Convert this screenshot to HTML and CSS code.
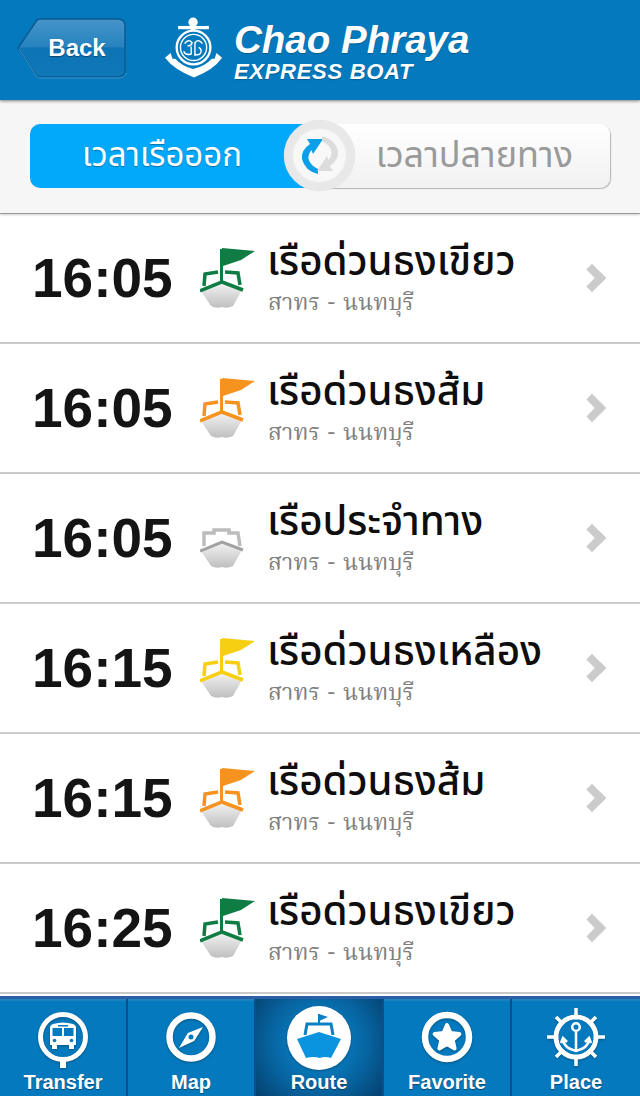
FILE: index.html
```html
<!DOCTYPE html>
<html lang="th">
<head>
  <meta charset="utf-8">
  <title>Chao Phraya Express Boat</title>
  <link rel="stylesheet" href="styles.css">
</head>
<body>
  <svg class="defs" width="0" height="0">
    <defs>
      <linearGradient id="hull" x1="0" y1="0" x2="0" y2="1">
        <stop offset="0" stop-color="#f2f2f2"/>
        <stop offset="1" stop-color="#bfbfbf"/>
      </linearGradient>
    </defs>
    <symbol id="boat" viewBox="0 0 56 66">
      <path d="M4 40 V27 H14 V24 H29 V27 H38 L40 40" fill="none" stroke="#bcbcbc" stroke-width="3.500"/>
      <path d="M1 45 L22 37 L42 44 L33 60 Q27 63 22 61 Q16 63 11 60 Z" fill="url(#hull)"/>
      <path d="M0 45 L22 36 L43 44" fill="none" stroke="#a2a2a2" stroke-width="3"/>
    </symbol>
    <symbol id="flagboat" viewBox="0 0 56 66">
      <path d="M4 40 L5 28 L18 26 M25 26 L38 27 L40 39" fill="none" stroke="currentColor" stroke-width="3.500"/>
      <path d="M1 45 L22 37 L42 44 L33 60 Q27 63 22 61 Q16 63 11 60 Z" fill="url(#hull)"/>
      <path d="M0 45 L22 36 L43 44" fill="none" stroke="currentColor" stroke-width="3.500"/>
      <path d="M21.500 36 V3" stroke="currentColor" stroke-width="3"/>
      <path d="M22 2 L55 5 L41 14 L23 20 Z" fill="currentColor"/>
    </symbol>
  </svg>

  <header class="topbar">
    <a class="back">
      <svg class="back-shape" viewBox="0 0 110 62" width="110" height="62">
        <defs>
          <linearGradient id="backfill" x1="0" y1="0" x2="0" y2="1">
            <stop offset="0" stop-color="#4594c8"/>
            <stop offset=".48" stop-color="#2683bf"/>
            <stop offset=".5" stop-color="#0d74b5"/>
            <stop offset="1" stop-color="#0f78b8"/>
          </linearGradient>
        </defs>
        <path d="M1 30 L20 2 Q21 1 24 1 H101 Q108 1 108 8 V52 Q108 59 101 59 H24 Q21 59 20 58 Z" fill="url(#backfill)" stroke="#0b5b90" stroke-width="1.500"/>
        <path d="M2 31 L20 59 Q21 60 24 60 H101 Q108 60 109 55" fill="none" stroke="#3e94ca" stroke-width="1"/>
      </svg>
      <span>Back</span>
    </a>
    <div class="logo">
      <svg class="anchor" viewBox="0 0 62 65" width="58" height="62">
        <circle cx="30" cy="6" r="5" fill="#fff"/>
        <rect x="27.500" y="9" width="5" height="8" fill="#fff"/>
        <rect x="14" y="10" width="33" height="3.500" fill="#fff"/>
        <path d="M0 44 L6 39 L8 45 L11 45 Q18 53 30 56 Q43 53 50 45 L53 45 L55 39 L61 44 Q52 57 31 65 Q10 57 0 44 Z" fill="#fff"/>
        <circle cx="30.500" cy="33" r="18" fill="#0479bd" stroke="#fff" stroke-width="2.500"/>
        <circle cx="30.500" cy="33" r="14" fill="none" stroke="#fff" stroke-width="1.500"/>
        <path d="M21 29 q4 -6 8 -1 q-1 4 -5 3 M40 29 q-4 -6 -8 -1 v14 M20 37 q2 5 8 3 v-8 M36 33 q4 2 2 6 q-2 3 -6 1" fill="none" stroke="#fff" stroke-width="1.500"/>
      </svg>
      <div class="logo-text">
        <div class="logo-name">Chao Phraya</div>
        <div class="logo-sub">EXPRESS BOAT</div>
      </div>
    </div>
  </header>

  <section class="filter">
    <div class="segment">
      <div class="seg seg-on">เวลาเรือออก</div>
      <div class="seg seg-off">เวลาปลายทาง</div>
      <div class="swap">
        <svg viewBox="0 0 38 38" width="38" height="38">
          <path d="M6 3 H22 L12 18 L10.500 14 Q7 18 7.500 23 Q9 29 17 33 L17 38 Q4 35 1 23 Q0 14 9 8 Z" fill="#0a9fe8"/>
          <path d="M32 35 H16 L26 20 L27.500 24 Q31 20 30.500 15 Q29 9 21 5 L21 0 Q34 3 37 15 Q38 24 29 30 Z" fill="#dcdcdc"/>
        </svg>
      </div>
    </div>
  </section>

  <main class="list">
    <div class="row">
      <div class="time">16:05</div>
      <svg class="boat c-green"><use href="#flagboat"/></svg>
      <div class="info"><div class="name">เรือด่วนธงเขียว</div><div class="route">สาทร - นนทบุรี</div></div>
      <span class="chev"></span>
    </div>
    <div class="row">
      <div class="time">16:05</div>
      <svg class="boat c-orange"><use href="#flagboat"/></svg>
      <div class="info"><div class="name">เรือด่วนธงส้ม</div><div class="route">สาทร - นนทบุรี</div></div>
      <span class="chev"></span>
    </div>
    <div class="row">
      <div class="time">16:05</div>
      <svg class="boat"><use href="#boat"/></svg>
      <div class="info"><div class="name">เรือประจำทาง</div><div class="route">สาทร - นนทบุรี</div></div>
      <span class="chev"></span>
    </div>
    <div class="row">
      <div class="time">16:15</div>
      <svg class="boat c-yellow"><use href="#flagboat"/></svg>
      <div class="info"><div class="name">เรือด่วนธงเหลือง</div><div class="route">สาทร - นนทบุรี</div></div>
      <span class="chev"></span>
    </div>
    <div class="row">
      <div class="time">16:15</div>
      <svg class="boat c-orange"><use href="#flagboat"/></svg>
      <div class="info"><div class="name">เรือด่วนธงส้ม</div><div class="route">สาทร - นนทบุรี</div></div>
      <span class="chev"></span>
    </div>
    <div class="row">
      <div class="time">16:25</div>
      <svg class="boat c-green"><use href="#flagboat"/></svg>
      <div class="info"><div class="name">เรือด่วนธงเขียว</div><div class="route">สาทร - นนทบุรี</div></div>
      <span class="chev"></span>
    </div>
  </main>

  <nav class="tabs">
    <div class="tab">
      <svg viewBox="0 0 60 64" width="60" height="64">
        <circle cx="30" cy="30" r="22.500" fill="none" stroke="#fff" stroke-width="5"/>
        <rect x="27" y="52" width="6" height="9" fill="#fff"/>
        <path d="M20 17 Q30 14 40 17 Q43 18 43 21 V38 H17 V21 Q17 18 20 17 Z" fill="#fff"/>
        <rect x="19.500" y="21" width="9.500" height="8" fill="#0479bd"/>
        <rect x="31" y="21" width="9.500" height="8" fill="#0479bd"/>
        <rect x="25" y="18" width="10" height="1.500" fill="#0479bd"/>
        <circle cx="21.500" cy="33.500" r="1.800" fill="#0479bd"/>
        <circle cx="38.500" cy="33.500" r="1.800" fill="#0479bd"/>
        <rect x="19" y="38" width="5" height="4" fill="#fff"/>
        <rect x="36" y="38" width="5" height="4" fill="#fff"/>
      </svg>
      <span>Transfer</span>
    </div>
    <div class="tab">
      <svg viewBox="0 0 60 64" width="60" height="64">
        <circle cx="30" cy="30" r="21.500" fill="none" stroke="#fff" stroke-width="6.500"/>
        <path d="M42 20 L33.200 33.900 L18 41 L26.800 26.100 Z" fill="#fff"/>
        <circle cx="30" cy="30" r="2.500" fill="#0479bd"/>
      </svg>
      <span>Map</span>
    </div>
    <div class="tab tab-on">
      <svg viewBox="0 0 64 64" width="64" height="64">
        <circle cx="32" cy="32" r="32" fill="#fff"/>
        <path d="M18 29 L20 18 H44 L46 29" fill="none" stroke="#0b7ec4" stroke-width="3"/>
        <path d="M32 18 V8" stroke="#0b7ec4" stroke-width="2"/>
        <path d="M32 8 L41 11 L32 15 Z" fill="#0b7ec4"/>
        <path d="M10 33 L32 26 L54 33 L44 52 Q38 50 33 52 Q26 50 19 52 Z" fill="#0a93de"/>
      </svg>
      <span>Route</span>
    </div>
    <div class="tab">
      <svg viewBox="0 0 60 64" width="60" height="64">
        <circle cx="30" cy="30" r="22" fill="none" stroke="#fff" stroke-width="6.500"/>
        <path d="M30 18 L33.500 26.100 L42.400 27 L35.700 32.900 L37.600 41.500 L30 37 L22.400 41.500 L24.300 32.900 L17.600 27 L26.500 26.100 Z" fill="#fff" stroke="#fff" stroke-width="4" stroke-linejoin="round"/>
      </svg>
      <span>Favorite</span>
    </div>
    <div class="tab">
      <svg viewBox="0 0 60 64" width="60" height="64">
        <circle cx="30" cy="30" r="20" fill="none" stroke="#fff" stroke-width="5"/>
        <path d="M30 1 V59 M1 30 H59 M10 10 L17 17 M50 10 L43 17 M10 50 L17 43 M50 50 L43 43" stroke="#fff" stroke-width="3.500"/>
        <circle cx="30" cy="30" r="17.500" fill="#0479bd"/>
        <circle cx="30" cy="20" r="3.800" fill="none" stroke="#fff" stroke-width="2.500"/>
        <path d="M30 24 V44 M17 33 Q18 41 30 44 Q42 41 43 33 M15 36 L17 31 L21 35 M45 36 L43 31 L39 35" fill="none" stroke="#fff" stroke-width="2.500"/>
      </svg>
      <span>Place</span>
    </div>
  </nav>
</body>
</html>
```

FILE: styles.css
```css
* {
  box-sizing: border-box;
}
html, body {
  margin: 0;
  padding: 0;
}
body {
  width: 640px;
  height: 1096px;
  overflow: hidden;
  display: flex;
  flex-direction: column;
  background: #fff;
  font-family: "Liberation Sans", Arial, sans-serif;
}
.defs {
  position: absolute;
}

.topbar {
  height: 100px;
  flex: none;
  display: flex;
  align-items: center;
  padding: 0 0 4px 17px;
  background: #0479bd;
  box-shadow: 0 1px 3px rgba(0, 0, 0, 0.5);
  position: relative;
  z-index: 2;
}
.back {
  width: 110px;
  height: 62px;
  display: flex;
  align-items: center;
  justify-content: center;
  padding-left: 10px;
  margin-top: 2px;
  color: #fff;
  font-size: 24px;
  font-weight: bold;
  text-shadow: 0 1px 1px rgba(0, 0, 0, 0.4);
  position: relative;
}
.back-shape {
  position: absolute;
  left: 0;
  top: 0;
}
.back span {
  position: relative;
  margin-top: -3px;
}
.logo {
  display: flex;
  align-items: center;
  margin-left: 38px;
  gap: 11px;
}
.anchor {
  margin-top: -2px;
}
.logo-text {
  color: #fff;
  font-style: italic;
  font-weight: bold;
  text-shadow: 0 1px 1px rgba(0, 0, 0, 0.25);
  padding-top: 7px;
}
.logo-name {
  font-size: 38.500px;
  line-height: 40px;
}
.logo-sub {
  font-size: 22px;
  line-height: 24px;
  letter-spacing: 0.700px;
}

.filter {
  height: 114px;
  flex: none;
  display: flex;
  align-items: center;
  padding: 0 30px;
  background: #f6f6f6;
  border-bottom: 1px solid #9a9a9a;
  box-shadow: 0 1px 2px rgba(0, 0, 0, 0.2);
  position: relative;
  z-index: 1;
}
.segment {
  width: 580px;
  height: 64px;
  display: flex;
  position: relative;
  margin-top: -2px;
}
.seg {
  flex: 1;
  display: flex;
  align-items: center;
  font-family: "Noto Sans", "Noto Sans Thai", sans-serif;
  font-size: 33px;
}
.seg-on {
  padding-left: 52px;
  background: #02a8f9;
  color: #fff;
  border-radius: 10px 0 0 10px;
  text-shadow: 0 1px 1px rgba(0, 0, 0, 0.3);
}
.seg-off {
  justify-content: flex-end;
  padding-right: 37px;
  font-size: 36px;
  background: linear-gradient(#fff, #f1f1f1);
  color: #9a9a9a;
  border-radius: 0 10px 10px 0;
  box-shadow: 1px 1px 1px #b4b4b4;
}
.swap {
  width: 71px;
  height: 71px;
  position: absolute;
  left: 254px;
  top: -4px;
  display: flex;
  align-items: center;
  justify-content: center;
  background: #f8f8f8;
  border: 8px solid #e8e8e8;
  border-radius: 50%;
  box-shadow: inset 0 0 2px #c8c8c8, 0 0 1px #ddd;
}

.list {
  flex: 1;
  min-height: 0;
  overflow: hidden;
  background: #fff;
}
.row {
  height: 130px;
  display: flex;
  align-items: center;
  padding-left: 32px;
  border-bottom: 2px solid #cacaca;
}
.time {
  width: 168px;
  font-size: 55px;
  font-weight: bold;
  color: #141414;
}
.boat {
  width: 56px;
  height: 66px;
  flex: none;
  margin-top: 2px;
  margin-right: 12px;
}
.c-green {
  color: #0f7d43;
}
.c-orange {
  color: #f6921e;
}
.c-yellow {
  color: #f7cf12;
}
.info {
  flex: 1;
  font-family: "Noto Sans", "Noto Sans Thai", sans-serif;
}
.name {
  margin-left: -1px;
  font-size: 40.300px;
  font-weight: 500;
  line-height: 46px;
  color: #0e0e0e;
}
.route {
  margin-top: 6px;
  font-family: "Noto Serif Thai", "Liberation Serif", serif;
  font-size: 23px;
  line-height: 30px;
  word-spacing: 2px;
  color: #808080;
}
.chev {
  width: 20px;
  height: 20px;
  flex: none;
  margin-right: 38px;
  border-top: 8px solid #cbcbcb;
  border-right: 8px solid #cbcbcb;
  transform: rotate(45deg);
}

.tabs {
  height: 100px;
  flex: none;
  display: flex;
  background: linear-gradient(#2a8ac5 0, #0479bd 3px);
  border-top: 3px solid #2c5fa3;
  position: relative;
  z-index: 2;
}
.tab {
  width: 128px;
  display: flex;
  flex-direction: column;
  align-items: center;
  padding-top: 8px;
  border-right: 2px solid #0b4f8e;
  color: #fff;
  font-size: 20px;
  line-height: 22px;
  font-weight: bold;
  text-shadow: 0 1px 1px rgba(0, 0, 0, 0.4);
}
.tab:last-child {
  border-right: none;
}
.tab svg {
  flex: none;
  filter: drop-shadow(0 1px 1px rgba(0, 0, 0, 0.3));
}
.tab-on {
  background: radial-gradient(circle at 50% 45%, #0a8fd8 0, #07639f 60%, #04406e 100%);
  padding-top: 7px;
}
.tab-on svg {
  margin-bottom: 1px;
}
```
